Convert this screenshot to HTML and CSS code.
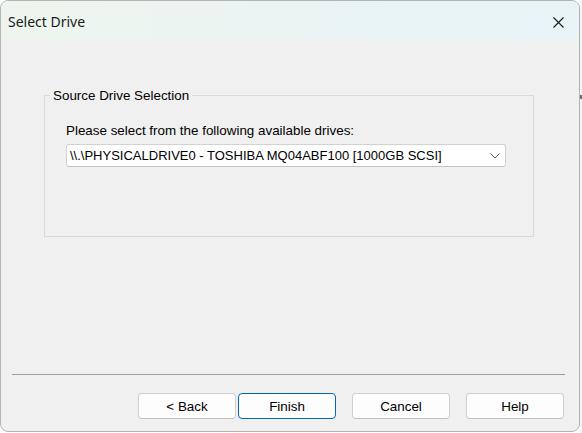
FILE: index.html
```html
<!DOCTYPE html>
<html>
<head>
<meta charset="utf-8">
<link rel="stylesheet" href="styles.css">
<title>Select Drive</title>
</head>
<body>
<div class="window">
  <div class="titlebar">
    <span class="title">Select Drive</span>
    <svg class="close" width="11" height="11" viewBox="0 0 11 11"><path d="M0.5 0.5 L10.5 10.5 M10.5 0.5 L0.5 10.5" stroke="#1b1b1b" stroke-width="1.1" fill="none"/></svg>
  </div>
  <div class="content">
    <fieldset class="group">
      <legend class="legend">Source Drive Selection</legend>
      <div class="group-body">
        <div class="label">Please select from the following available drives:</div>
        <div class="combo">
          <span class="combo-text">\\.\PHYSICALDRIVE0 - TOSHIBA MQ04ABF100 [1000GB SCSI]</span>
          <svg class="chevron" width="10" height="6" viewBox="0 0 10 6"><path d="M0.5 0.5 L5 5 L9.5 0.5" stroke="#5f5f5f" stroke-width="1" fill="none"/></svg>
        </div>
      </div>
    </fieldset>
  </div>
  <div class="footer">
    <div class="separator"></div>
    <div class="buttons">
      <button class="btn">&lt; Back</button>
      <button class="btn default">Finish</button>
      <button class="btn gap">Cancel</button>
      <button class="btn gap">Help</button>
    </div>
  </div>
</div>
<div class="edge"><div class="tick"></div></div>
</body>
</html>
```
FILE: styles.css
```css
html, body {
  margin: 0;
  padding: 0;
}
body {
  width: 582px;
  height: 433px;
  background: #ffffff;
  display: flex;
  overflow: hidden;
  font-family: "Liberation Sans", Arial, sans-serif;
  font-size: 13px;
  color: #000;
}
.window {
  box-sizing: border-box;
  width: 580px;
  height: 432px;
  border: 1px solid #b4b4b4;
  border-radius: 8px;
  background: #f0f0f0;
  display: flex;
  flex-direction: column;
  overflow: hidden;
}
.edge {
  width: 2px;
  background: #f4f4f4;
}
.tick {
  margin-top: 95px;
  width: 2px;
  height: 4px;
  background: #6e6e6e;
}
.titlebar {
  height: 39px;
  flex: none;
  display: flex;
  align-items: center;
  justify-content: space-between;
  padding: 0 15px 0 7px;
  background: linear-gradient(90deg, #eef5ee 0%, #eaf4f3 50%, #e7f3f7 100%);
}
.title {
  font-family: "Noto Sans", "Segoe UI", sans-serif;
  font-size: 14px;
  color: #1a1a1a;
  margin-top: 2px;
}
.close {
  display: block;
  margin-top: 3px;
}
.content {
  flex: 1;
  padding: 48px 0 0 43px;
}
.group {
  box-sizing: border-box;
  margin: 0;
  padding: 0;
  width: 490px;
  height: 149px;
  border: 1px solid #d9d9d9;
  border-radius: 0;
}
.legend {
  margin-left: 5px;
  padding: 0 3px;
  line-height: 15px;
  font-size: 13.4px;
  color: #000;
}
.group-body {
  padding: 20px 0 0 21px;
}
.label {
  line-height: 16px;
  margin-bottom: 5px;
  font-size: 13.4px;
}
.combo {
  box-sizing: border-box;
  width: 440px;
  height: 23px;
  background: #ffffff;
  border: 1px solid #d2d2d2;
  border-bottom-color: #c4c4c4;
  border-radius: 3px;
  display: flex;
  align-items: center;
  justify-content: space-between;
  padding: 0 5px 0 3px;
}
.combo-text {
  line-height: 16px;
}
.chevron {
  display: block;
}
.footer {
  flex: none;
  padding: 0 15px 12px 11px;
}
.separator {
  height: 1px;
  margin-right: -1px;
  background: #a0a0a0;
}
.buttons {
  display: flex;
  justify-content: flex-end;
  margin-top: 18px;
}
.btn {
  box-sizing: border-box;
  width: 98px;
  height: 26px;
  margin: 0 0 0 2px;
  padding: 0;
  background: #fdfdfd;
  border: 1px solid #d0d0d0;
  border-bottom-color: #c2c2c2;
  border-radius: 4px;
  font-family: "Liberation Sans", Arial, sans-serif;
  font-size: 13.4px;
  color: #000;
}
.btn.default {
  border: 1px solid #0067c0;
}
.btn.gap {
  margin-left: 16px;
}
```
